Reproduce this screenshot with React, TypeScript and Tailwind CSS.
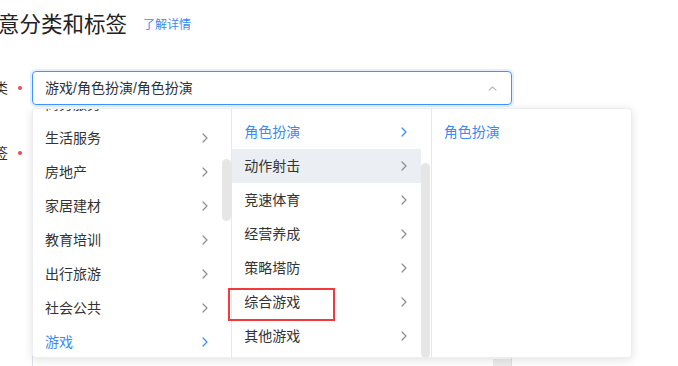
const FONT = '"Liberation Sans", "Noto Sans CJK SC", sans-serif';

type Item = { label: string; active?: boolean; hover?: boolean; leaf?: boolean };

const COL1: Item[] = [
  { label: "商务服务" },
  { label: "生活服务" },
  { label: "房地产" },
  { label: "家居建材" },
  { label: "教育培训" },
  { label: "出行旅游" },
  { label: "社会公共" },
  { label: "游戏", active: true },
];

const COL2: Item[] = [
  { label: "角色扮演", active: true },
  { label: "动作射击", hover: true },
  { label: "竞速体育" },
  { label: "经营养成" },
  { label: "策略塔防" },
  { label: "综合游戏" },
  { label: "其他游戏" },
];

const COL3: Item[] = [{ label: "角色扮演", active: true, leaf: true }];

function Chevron({ blue }: { blue?: boolean }) {
  return (
    <svg width="6" height="10" viewBox="0 0 6 10" fill="none">
      <polyline
        points="1,1 5,5 1,9"
        stroke={blue ? "#3a8bf5" : "#8a8d93"}
        strokeWidth="1.2"
        strokeLinecap="round"
        strokeLinejoin="round"
      />
    </svg>
  );
}

function Column({
  items,
  offset,
  bar,
  last,
}: {
  items: Item[];
  offset?: boolean;
  bar?: { top: number; height: number };
  last?: boolean;
}) {
  return (
    <div
      className={
        "relative h-full w-[200px] overflow-hidden py-[6px] " +
        (last ? "" : "border-r border-[#e4e7ed]")
      }
    >
      {/* first column is scrolled a little, so its top row is clipped */}
      <div className={offset ? "mt-[-28px]" : ""}>
        {items.map((it) => (
          <div
            key={it.label}
            className={
              "flex h-[34px] w-[189px] items-center justify-between pl-[12px] pr-[14px] text-[14px] " +
              (it.hover ? "bg-[#ebeef2] " : "") +
              (it.active ? "text-[#3a8bf5]" : "text-[#333]")
            }
          >
            <span>{it.label}</span>
            {!it.leaf && <Chevron blue={it.active} />}
          </div>
        ))}
      </div>
      {bar && (
        <div
          className="absolute left-[189px] w-[9px] rounded-[5px] bg-[#e6e6e6]"
          style={{ top: bar.top, height: bar.height }}
        />
      )}
    </div>
  );
}

export default function App() {
  return (
    <div
      className="relative h-[366px] w-[678px] overflow-hidden bg-white"
      style={{ fontFamily: FONT }}
    >
      <div className="ml-[-23.5px] flex h-[50px] items-center">
        <span className="whitespace-nowrap text-[21.5px] leading-[28px] text-[#222]">
          创意分类和标签
        </span>
        <span className="ml-[16px] text-[12px] text-[#3a8bf5]">了解详情</span>
      </div>

      <div className="mt-[21px] flex h-[34px] items-center">
        <div className="flex w-[32px] items-center justify-end whitespace-nowrap pr-[10px]">
          <span className="text-[14px] text-[#333]">分类</span>
          <span className="ml-[10px] h-[4px] w-[4px] shrink-0 rounded-full bg-[#f5454b]" />
        </div>
        <div className="flex h-[34px] w-[480px] items-center justify-between rounded-[4px] border border-[#4094ff] pl-[12px] pr-[14px] shadow-[0_0_0_2px_rgba(64,148,255,0.15)]">
          <span className="text-[14px] text-[#333]">游戏/角色扮演/角色扮演</span>
          <svg width="9" height="5" viewBox="0 0 9 5" fill="none">
            <polyline
              points="1,4.2 4.5,1 8,4.2"
              stroke="#b4b7bd"
              strokeWidth="1.1"
              strokeLinecap="round"
              strokeLinejoin="round"
            />
          </svg>
        </div>
      </div>

      <div className="mt-[31px] flex items-start">
        <div className="flex h-[34px] w-[32px] items-center justify-end whitespace-nowrap pr-[10px]">
          <span className="text-[14px] text-[#333]">标签</span>
          <span className="ml-[10px] h-[4px] w-[4px] shrink-0 rounded-full bg-[#f5454b]" />
        </div>
        <div className="relative h-[260px] w-[480px] rounded-[4px] border border-[#dde1e8]">
          <div className="absolute bottom-0 right-0 h-[36px] w-[18px] bg-[#ececec]" />
        </div>
      </div>

      {/* cascader dropdown */}
      <div className="absolute left-[32px] top-[108px] flex h-[250px] w-[600px] rounded-[4px] border border-[#eceef2] bg-white shadow-[0_2px_10px_rgba(0,0,0,0.12)]">
        <Column items={COL1} offset bar={{ top: 50, height: 62 }} />
        <Column items={COL2} bar={{ top: 54, height: 195 }} />
        <Column items={COL3} last />
      </div>

      {/* highlight box */}
      <div className="absolute left-[228px] top-[288px] h-[33px] w-[107px] border-2 border-[#f23a3a]" />
    </div>
  );
}
